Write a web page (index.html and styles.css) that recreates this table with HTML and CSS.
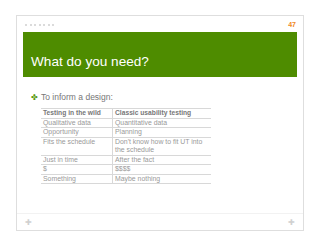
FILE: index.html
```html
<!DOCTYPE html>
<html>
<head>
    <title>What do you need?</title>
    <link rel="stylesheet" href="styles.css">
</head>
<body>
    <div class="slide">
        <div class="slide-top">
            <div class="dots">
                <span></span><span></span><span></span><span></span><span></span><span></span><span></span>
            </div>
            <span class="page-num">47</span>
        </div>
        <div class="title-bar">
            <h1>What do you need?</h1>
        </div>
        <div class="content">
            <p class="bullet"><span class="mark">&#10020;</span>To inform a design:</p>
            <table>
                <thead>
                    <tr>
                        <th>Testing in the wild</th>
                        <th>Classic usability testing</th>
                    </tr>
                </thead>
                <tbody>
                    <tr><td>Qualitative data</td><td>Quantitative data</td></tr>
                    <tr><td>Opportunity</td><td>Planning</td></tr>
                    <tr><td>Fits the schedule</td><td>Don't know how to fit UT into the schedule</td></tr>
                    <tr><td>Just in time</td><td>After the fact</td></tr>
                    <tr><td>$</td><td>$$$$</td></tr>
                    <tr><td>Something</td><td>Maybe nothing</td></tr>
                </tbody>
            </table>
        </div>
        <div class="slide-bottom">
            <span class="corner">&#10010;</span>
            <span class="corner">&#10010;</span>
        </div>
    </div>
</body>
</html>
```
FILE: styles.css
```css
body {
    margin: 0;
    background: white;
    font-family: "Liberation Sans", Arial, sans-serif;
}
.slide {
    margin: 15px 16px;
    width: 286px;
    height: 214px;
    border: 1px solid #dedede;
    display: flex;
    flex-direction: column;
}
.slide-top {
    display: flex;
    justify-content: space-between;
    align-items: center;
    height: 16px;
    padding: 1px 7px 0 8px;
    box-sizing: border-box;
}
.dots {
    display: flex;
    gap: 2.5px;
}
.dots span {
    width: 2px;
    height: 2px;
    border-radius: 50%;
    background: #cfcfcf;
}
.page-num {
    color: #f08a24;
    font-size: 7px;
    font-weight: bold;
}
.title-bar {
    margin: 0 6px;
    height: 45px;
    background: #4e8c00;
    display: flex;
    align-items: flex-end;
}
.title-bar h1 {
    margin: 0 0 8px 8px;
    color: white;
    font-size: 13.6px;
    font-weight: normal;
}
.content {
    flex: 1;
    padding: 0 0 0 14px;
}
.bullet {
    margin: 15px 0 6px 0;
    font-size: 8.5px;
    color: #777;
    display: flex;
    align-items: center;
}
.mark {
    color: #5a9a10;
    font-size: 8px;
    margin-right: 3px;
}
table {
    margin-left: 10px;
    width: 170px;
    border-collapse: collapse;
    font-size: 6.9px;
    color: #999;
    border-top: 1px solid #d8d8d8;
}
th, td {
    text-align: left;
    padding: 0 2px;
    height: 8.5px;
    line-height: 8.5px;
    border-bottom: 1px solid #d8d8d8;
    vertical-align: top;
}
th {
    font-size: 6.7px;
    font-weight: bold;
    color: #777;
}
th:first-child, td:first-child {
    width: 67px;
    border-right: 1px solid #d8d8d8;
}
.slide-bottom {
    height: 16px;
    display: flex;
    justify-content: space-between;
    align-items: center;
    padding: 0 8px 0 8px;
    border-top: 1px solid #f2f2f2;
}
.corner {
    color: #d0d0d0;
    font-size: 8px;
}
```
